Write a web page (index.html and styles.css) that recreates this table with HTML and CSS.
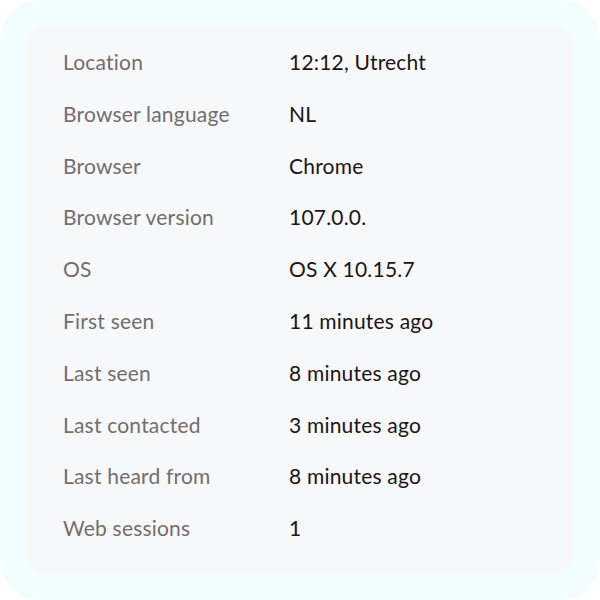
FILE: index.html
```html
<!DOCTYPE html>
<html lang="en">
<head>
    <meta charset="UTF-8">
    <title>Visitor details</title>
    <link rel="stylesheet" href="styles.css">
</head>
<body>
    <div class="frame">
        <dl class="details">
            <dt>Location</dt><dd>12:12, Utrecht</dd>
            <dt>Browser language</dt><dd>NL</dd>
            <dt>Browser</dt><dd>Chrome</dd>
            <dt>Browser version</dt><dd>107.0.0.</dd>
            <dt>OS</dt><dd>OS X 10.15.7</dd>
            <dt>First seen</dt><dd>11 minutes ago</dd>
            <dt>Last seen</dt><dd>8 minutes ago</dd>
            <dt>Last contacted</dt><dd>3 minutes ago</dd>
            <dt>Last heard from</dt><dd>8 minutes ago</dd>
            <dt>Web sessions</dt><dd>1</dd>
        </dl>
    </div>
</body>
</html>
```

FILE: styles.css
```css
* { margin: 0; padding: 0; box-sizing: border-box; }
body { background: #fff; font-family: 'Lato', sans-serif; }
.frame { width: 600px; height: 600px; padding: 26px; background: #f2fdfd; border-radius: 40px; }
.details { height: 100%; background: #f7f8f9; border-radius: 20px; padding: 23px 36px 0 37px; display: grid; grid-template-columns: 226px 1fr; row-gap: 26.8px; font-size: 21px; line-height: 25px; letter-spacing: 0.2px; align-content: start; }
.details dt { color: #736e6c; }
.details dd { color: #1c1515; }
```
